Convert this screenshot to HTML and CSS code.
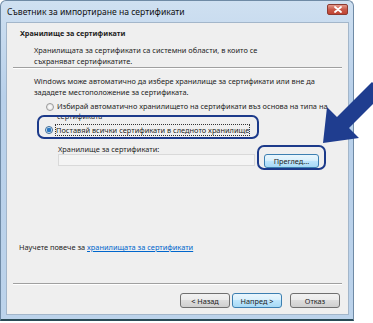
FILE: index.html
```html
<!DOCTYPE html>
<html>
<head>
<meta charset="utf-8">
<link rel="stylesheet" href="styles.css">
</head>
<body>
<div class="stage">
  <div class="window">
    <div class="titlebar">
      <span class="title">Съветник за импортиране на сертификати</span>
      <span class="close"><svg width="10" height="7" viewBox="0 0 10 7"><path d="M2 1 L8 6 M8 1 L2 6" stroke="#fff" stroke-width="1.8" stroke-linecap="round"/></svg></span>
    </div>
    <div class="client">
      <div class="header">
        <div class="heading">Хранилище за сертификати</div>
        <div class="desc">Хранилищата за сертификати са системни области, в които се<br>съхраняват сертификатите.</div>
      </div>
      <div class="sep"></div>
      <div class="body">
        <div class="intro">Windows може автоматично да избере хранилище за сертификати или вне да<br>зададете местоположение за сертификата.</div>
        <div class="opt opt1"><span class="radio"></span><span>Избирай автоматично хранилището на сертификати въз основа на типа на<br>сертификата</span></div>
        <div class="opt opt2"><span class="radio on"></span><span class="focus">Поставяй всички сертификати в следното хранилище</span></div>
        <div class="storelabel">Хранилище за сертификати:</div>
        <div class="storerow">
          <div class="field"></div>
          <button class="btn blue browse">Преглед...</button>
        </div>
        <div class="spacer"></div>
        <div class="more">Научете повече за <a href="#">хранилищата за сертификати</a></div>
      </div>
      <div class="sep bottom"></div>
      <div class="buttons">
        <button class="btn">&lt; Назад</button>
        <button class="btn blue">Напред &gt;</button>
        <button class="btn cancel">Отказ</button>
      </div>
    </div>
  </div>
  <div class="hl hl-radio"></div>
  <div class="hl hl-browse"></div>
  <svg class="arrow" width="373" height="323" viewBox="0 0 373 323">
    <polygon points="323,143 327,107 337,117 372,82 384,93 349,128 359,138" fill="#1f3d8f"/>
  </svg>
</div>
</body>
</html>
```
FILE: styles.css
```css
* { box-sizing: border-box; }
html, body { margin: 0; padding: 0; background: #fff; }
body { font-family: "Noto Sans", "Liberation Sans", sans-serif; font-size: 7.4px; color: #1e1e1e; white-space: nowrap; }
.stage { position: relative; width: 373px; height: 323px; overflow: hidden; }
.window {
  width: 354px; height: 321px;
  background: linear-gradient(#cfe0f1, #b8d0ea 30%, #bcd3eb);
  border: 1px solid #6f8aa5; border-bottom: 2px solid #2a4a55;
  border-radius: 6px 6px 0 0;
  display: flex; flex-direction: column;
  padding: 0 4px 4px 5px;
}
.titlebar { height: 21px; display: flex; align-items: center; justify-content: space-between; padding: 0 1px 0 1px; }
.title { font-size: 8.6px; color: #111; }
.close {
  width: 21px; height: 11px; margin-top: -5px;
  background: linear-gradient(#e39a8c, #c9594a 50%, #c04432);
  border: 1px solid #8c3b32; border-radius: 2px;
  display: flex; align-items: center; justify-content: center;
}
.client { flex: 1; background: #efefef; border: 1px solid #a3b6ca; display: flex; flex-direction: column; }
.header { padding: 5px 0 0 13px; }
.heading { font-weight: bold; font-size: 7.3px; line-height: 11px; }
.desc { margin: 6px 0 0 14px; line-height: 11px; }
.sep { height: 2px; margin: 0 6px; border-top: 1px solid #a0a0a0; border-bottom: 1px solid #fff; }
.body { flex: 1; display: flex; flex-direction: column; padding: 7px 0 0 27px; }
.intro { line-height: 10.5px; }
.opt { display: flex; align-items: flex-start; line-height: 10px; margin-left: 12px; }
.opt1 { margin-top: 4px; }
.opt2 { margin-top: 4px; margin-left: 11px; }
.radio {
  width: 8px; height: 8px; border-radius: 50%; flex: none;
  border: 1px solid #9a9a9a; background: radial-gradient(#fff, #dcdcdc);
  margin: 2px 3px 0 0;
}
.opt2 .radio { margin-top: 1px; }
.radio.on { border-color: #3a6b97; background: radial-gradient(circle, #2b78c3 0 2px, #cfe2f3 2.5px, #f4f8fc); }
.focus { outline: 1px dotted #333; outline-offset: 0; }
.storelabel { margin: 9px 0 0 24px; line-height: 10px; }
.storerow { display: flex; align-items: flex-start; margin-left: 24px; margin-top: 0; }
.field { width: 197px; height: 12px; border: 1px solid #d9d9d9; background: #f4f4f4; }
.btn {
  font-family: inherit; font-size: 7.3px; color: #222;
  height: 15px; padding: 0; width: 50px;
  border: 1px solid #707070; border-radius: 3px;
  background: linear-gradient(#f2f2f2, #ebebeb 45%, #dddddd 50%, #cfcfcf);
}
.btn.blue { border-color: #3c7fb1; background: linear-gradient(#eaf6fd, #d9f0fc 45%, #bee6fd 50%, #a7d9f5); }
.browse { width: 55px; height: 14px; margin-left: 9px; }
.spacer { flex: 1; }
.more { margin: 0 0 31px -15px; line-height: 10px; }
.more a { color: #0066cc; }
.sep.bottom { margin: 0 6px 0 6px; }
.buttons { display: flex; justify-content: flex-end; gap: 2px; padding: 8px 8px 6px 0; }
.btn.cancel { margin-left: 6px; }
.hl { position: absolute; border: 2px solid #1c3a8a; border-radius: 7px; }
.hl-radio { left: 37px; top: 115px; width: 222px; height: 24px; }
.hl-browse { left: 257px; top: 145px; width: 69px; height: 25px; }
.arrow { position: absolute; left: 0; top: 0; }
```
